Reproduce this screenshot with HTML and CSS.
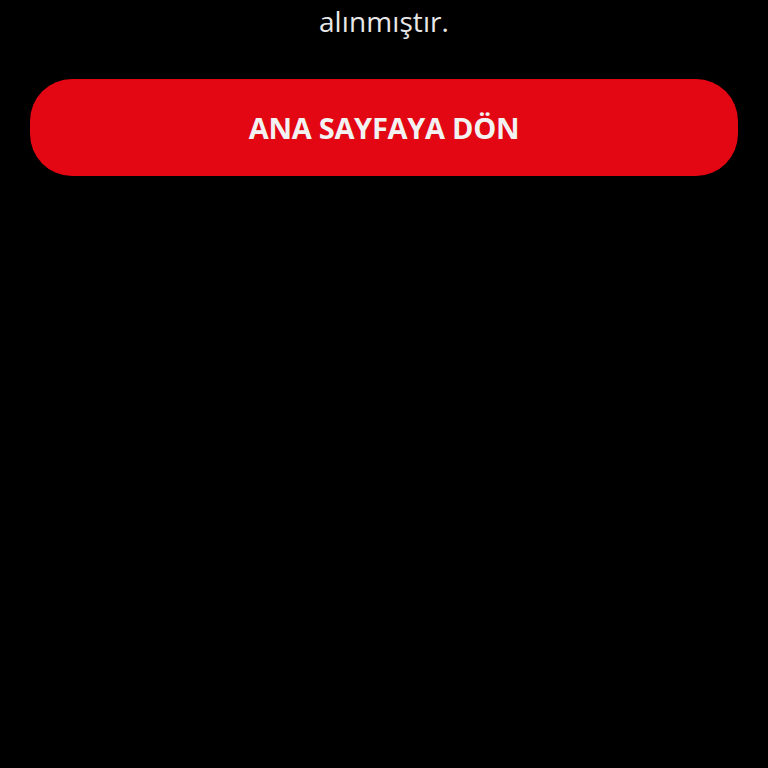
FILE: index.html
```html
<!DOCTYPE html>
<html lang="tr">
<head>
<meta charset="utf-8">
<link rel="stylesheet" href="styles.css">
</head>
<body>
<main class="page">
  <p class="message">alınmıştır.</p>
  <button class="home-btn" type="button">ANA SAYFAYA DÖN</button>
</main>
</body>
</html>
```
FILE: styles.css
```css
html, body {
  margin: 0;
  padding: 0;
  background: #000;
  height: 100%;
}
body {
  font-family: "Open Sans", "Noto Sans", sans-serif;
}
.page {
  display: flex;
  flex-direction: column;
  padding: 0 30px;
}
.message {
  margin: 3px 0 0;
  font-size: 28px;
  line-height: 36px;
  font-weight: 400;
  letter-spacing: 0.1px;
  color: #e8e8e8;
  text-align: center;
}
.home-btn {
  margin-top: 40px;
  height: 97px;
  border: none;
  border-radius: 42px;
  background: #e30613;
  color: #f2f2f2;
  font-family: "Open Sans", "Noto Sans", sans-serif;
  font-weight: 700;
  font-size: 29px;
  letter-spacing: -0.3px;
  cursor: pointer;
}
```
